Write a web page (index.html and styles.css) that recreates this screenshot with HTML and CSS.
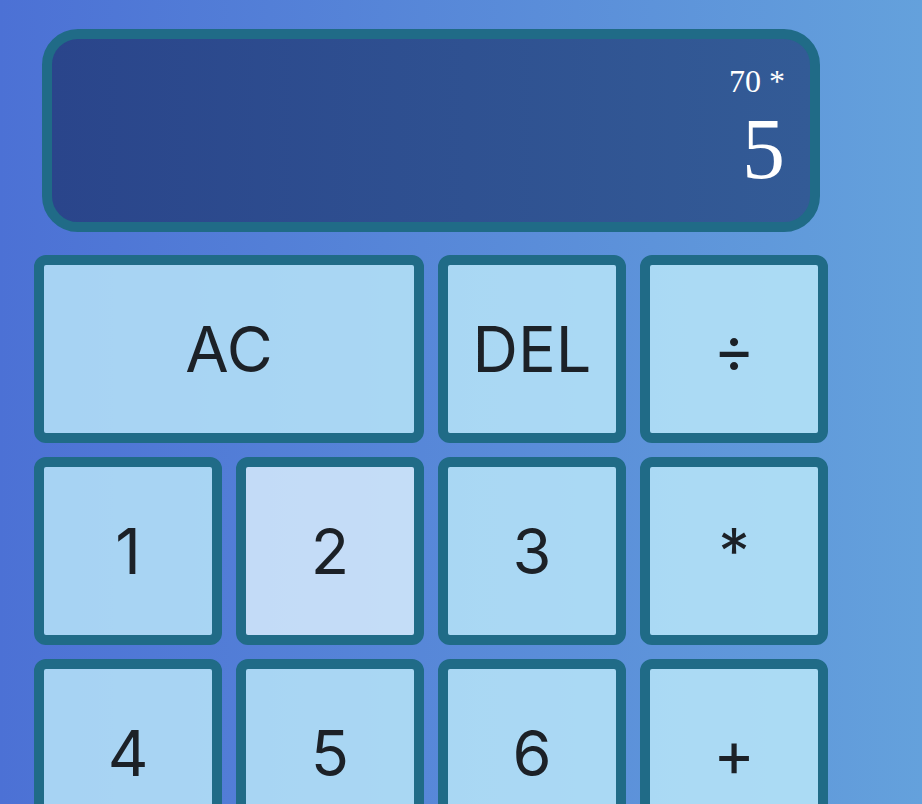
FILE: index.html
```html
<!DOCTYPE html>
<html lang="en">
<head>
<meta charset="utf-8">
<title>Calculator</title>
<link rel="stylesheet" href="styles.css">
</head>
<body>
<div class="calculator">
  <div class="output">
    <div class="previous">70 *</div>
    <div class="current">5</div>
  </div>
  <button class="key span-two">AC</button>
  <button class="key">DEL</button>
  <button class="key">÷</button>
  <button class="key">1</button>
  <button class="key is-hover">2</button>
  <button class="key">3</button>
  <button class="key">*</button>
  <button class="key">4</button>
  <button class="key">5</button>
  <button class="key">6</button>
  <button class="key">+</button>
  <button class="key">7</button>
  <button class="key">8</button>
  <button class="key">9</button>
  <button class="key">-</button>
  <button class="key">.</button>
  <button class="key">0</button>
  <button class="key span-two">=</button>
</div>
</body>
</html>
```

FILE: styles.css
```css
html, body {
  margin: 0;
  padding: 0;
  height: 100%;
  overflow: hidden;
}

body {
  background: linear-gradient(to right, #4c71d5, #64a1dc);
  font-family: Inter, "Liberation Sans", sans-serif;
}

.calculator {
  display: grid;
  grid-template-columns: repeat(4, 188px);
  grid-template-rows: auto;
  grid-auto-rows: 188px;
  gap: 14px;
  padding: 29px 0 0 34px;
}

.output {
  grid-column: 1 / -1;
  height: 203px;
  box-sizing: border-box;
  margin: 0 8px 9px;
  padding: 26px 25px 30px;
  border: 10px solid #206b87;
  border-radius: 36px;
  background: linear-gradient(to right, #2a458b, #335b96);
  display: flex;
  flex-direction: column;
  align-items: flex-end;
  gap: 9px;
  color: #ffffff;
  font-family: "Liberation Serif", serif;
}

.previous {
  font-size: 32px;
  line-height: 32px;
}

.current {
  font-size: 86px;
  line-height: 86px;
}

.key {
  box-sizing: border-box;
  margin: 0;
  padding: 0;
  border: 10px solid #206b87;
  border-radius: 12px;
  background: rgba(190, 235, 250, 0.8);
  color: #1c2127;
  font-family: Inter, "Liberation Sans", sans-serif;
  font-size: 63px;
  line-height: 1;
  display: flex;
  align-items: center;
  justify-content: center;
  cursor: pointer;
}

.key:hover,
.key.is-hover {
  background: rgba(224, 242, 255, 0.8);
}

.span-two {
  grid-column: span 2;
}
```
